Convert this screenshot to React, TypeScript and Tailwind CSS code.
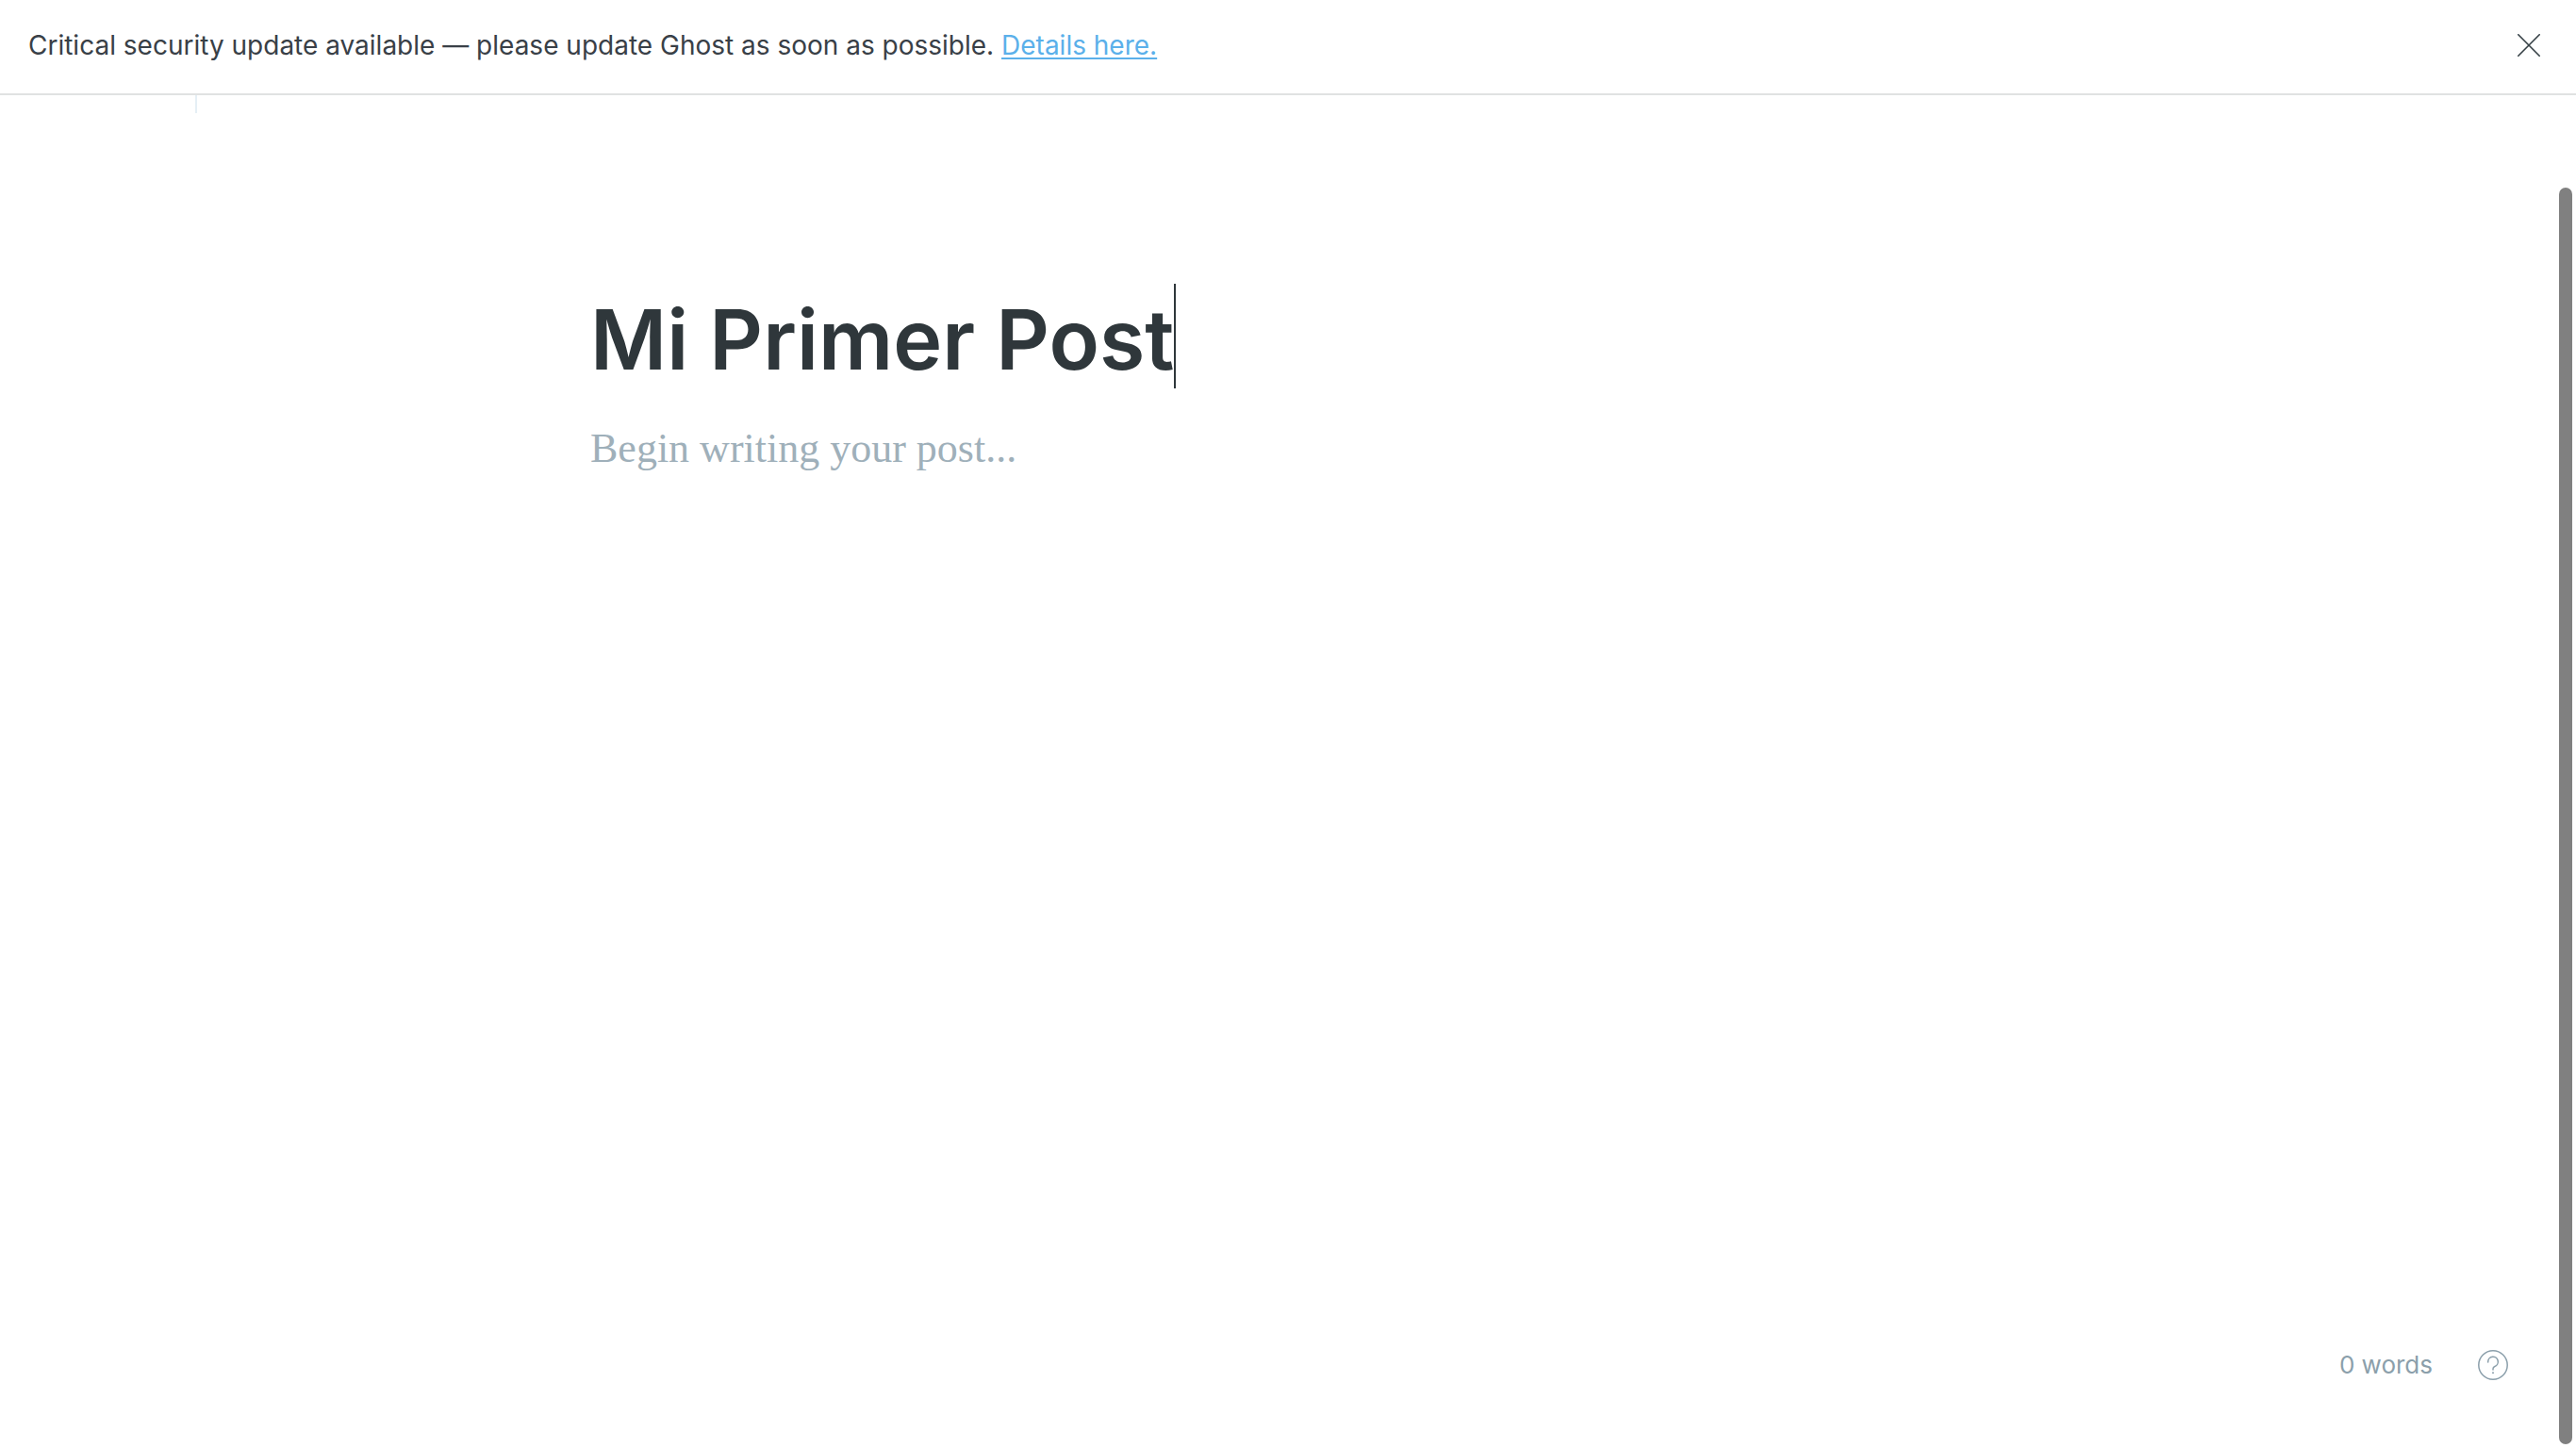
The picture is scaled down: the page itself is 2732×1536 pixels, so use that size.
function CloseIcon() {
  return (
    <svg className="size-6" viewBox="0 0 24 24" fill="none" stroke="currentColor" strokeWidth="1.6" strokeLinecap="round" aria-hidden="true">
      <path d="M.8.8l22.4 22.4M23.2.8L.8 23.2" />
    </svg>
  );
}

function HelpIcon() {
  return (
    <svg className="size-8" viewBox="0 0 32 32" fill="none" stroke="currentColor" strokeWidth="1.5" strokeLinecap="round" aria-hidden="true">
      <circle cx="16" cy="16" r="15.2" />
      <path d="M10.7 13v-.5a5.3 5.3 0 1 1 7.2 5c-1.3.5-1.9 1.3-1.9 2.5v1" />
      <circle cx="16" cy="24.3" r="1" fill="currentColor" stroke="none" />
    </svg>
  );
}

function Banner() {
  return (
    <header className="flex items-center justify-between border-b-2 border-[#e0e2e2] pt-7 pr-[38px] pb-[31px] pl-[30px] text-[28px] leading-[40px] text-[#394047]">
      <p>
        Critical security update available — please update Ghost as soon as possible.{" "}
        <a href="#details" className="text-[#5bb0ea] underline decoration-2 underline-offset-[3px]">
          Details here.
        </a>
      </p>
      <button type="button" aria-label="Dismiss" className="text-[#343f44]">
        <CloseIcon />
      </button>
    </header>
  );
}

export default function App() {
  return (
    <div className="relative flex min-h-screen flex-col bg-white font-['Inter',sans-serif]">
      <Banner />
      <div className="ml-[207px] h-[19px] w-0.5 bg-[#e5eff5]" />
      <main className="mx-auto flex w-full max-w-[1480px] flex-1 flex-col pt-[181px]">
        <div className="flex items-center">
          <input
            aria-label="Post title"
            defaultValue="Mi Primer Post"
            className="field-sizing-content h-[111px] pt-1.5 text-[88px] font-semibold text-[#2f373b] outline-none"
          />
          <span className="h-[111px] w-0.5 bg-[#2f373b]" />
        </div>
        <textarea
          aria-label="Post body"
          placeholder="Begin writing your post..."
          className="mt-8 w-full flex-1 resize-none font-['Liberation_Serif',serif] text-[44px] leading-[64px] outline-none placeholder:text-[#9fb0ba]"
        />
      </main>
      <footer className="flex items-center justify-end gap-12 pr-[72px] pb-[68px] text-[26px] leading-[40px] text-[#8b9fab]">
        <span>0 words</span>
        <button type="button" aria-label="Help">
          <HelpIcon />
        </button>
      </footer>
      <div className="absolute top-[199px] right-1 bottom-1 w-3.5 rounded-full bg-[#808080]" />
    </div>
  );
}
